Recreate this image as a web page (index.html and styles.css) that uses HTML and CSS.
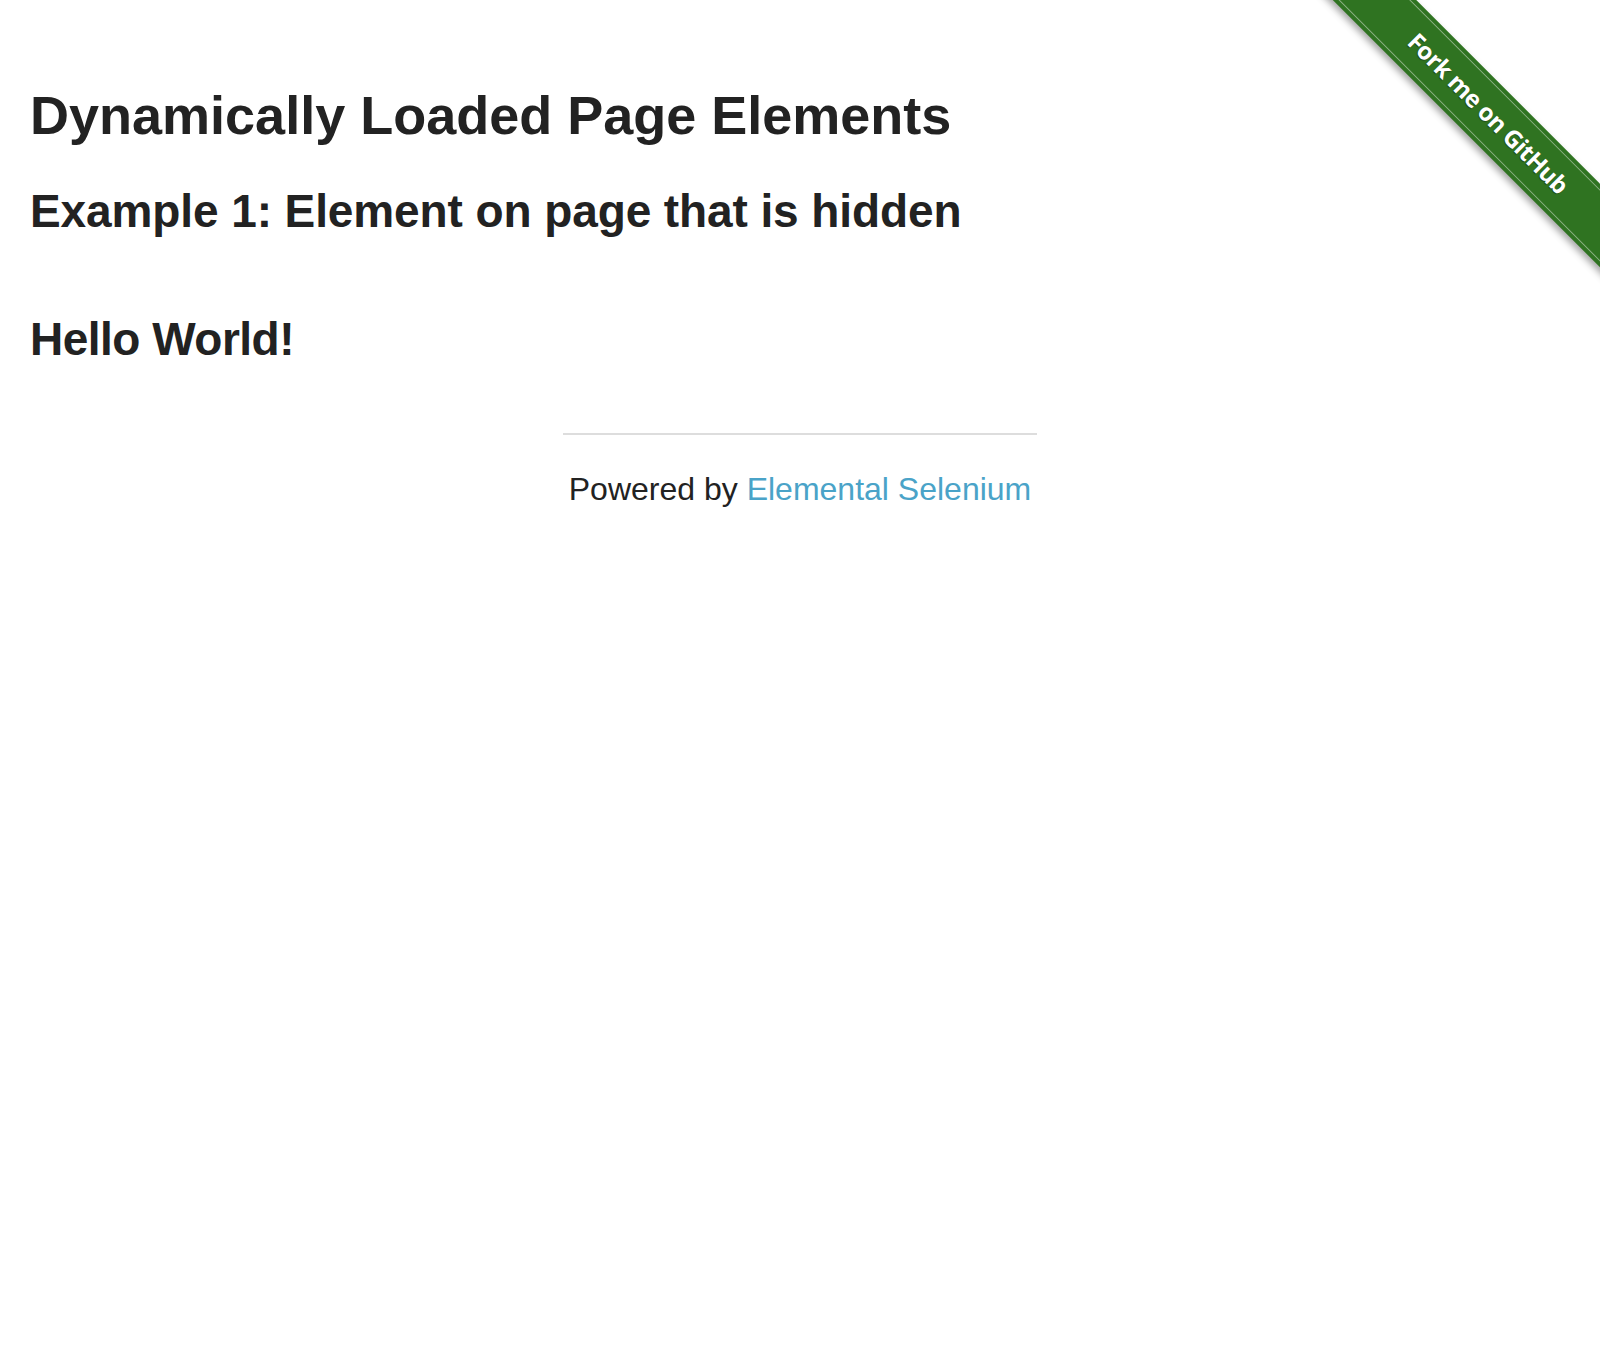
FILE: index.html
```html
<!DOCTYPE html>
<html>
<head>
<meta charset="utf-8">
<title>The Internet</title>
<link rel="stylesheet" href="styles.css">
</head>
<body>
<div class="ribbon-wrap">
  <a class="ribbon" href="#"><span class="ribbon-text">Fork me on GitHub</span></a>
</div>
<div class="content">
  <h3 class="title">Dynamically Loaded Page Elements</h3>
  <h4 class="subtitle">Example 1: Element on page that is hidden</h4>
  <div class="finish"><h4 class="subtitle hello">Hello World!</h4></div>
</div>
<div class="footer">
  <hr class="rule">
  <div class="powered">Powered by <a class="link" href="#">Elemental Selenium</a></div>
</div>
</body>
</html>
```
FILE: styles.css
```css
html, body {
  margin: 0;
  padding: 0;
  background: #fff;
}
body {
  font-family: "Liberation Sans", Arial, Helvetica, sans-serif;
  color: #222;
  width: 1600px;
  position: relative;
}
.content {
  padding-left: 30px;
  padding-top: 83px;
}
.title {
  font-size: 54px;
  line-height: 1.2;
  font-weight: bold;
  margin: 0;
  letter-spacing: 0;
}
.subtitle {
  font-size: 46px;
  line-height: 1.2;
  font-weight: bold;
  margin: 36px 0 0 0;
  letter-spacing: -0.1px;
}
.finish {
  margin-top: 73px;
}
.finish .hello {
  margin: 0;
  letter-spacing: -0.5px;
}
.footer {
  width: 474px;
  margin: 66px auto 0 auto;
}
.rule {
  border: 0;
  border-top: 2px solid #ddd;
  height: 0;
  margin: 0;
}
.powered {
  text-align: center;
  font-size: 32px;
  line-height: 48px;
  margin-top: 30px;
}
.link {
  color: #4aa3c8;
  text-decoration: none;
}
.ribbon-wrap {
  position: absolute;
  top: 0;
  right: 0;
  width: 300px;
  height: 300px;
  overflow: hidden;
}
.ribbon {
  position: absolute;
  left: -22px;
  top: 84px;
  width: 420px;
  height: 59px;
  background: #2f7321;
  transform: rotate(45deg);
  box-shadow: 0 4px 7px rgba(0, 0, 0, 0.35);
  display: flex;
  align-items: center;
  justify-content: center;
  text-decoration: none;
}
.ribbon::before {
  content: "";
  position: absolute;
  left: 0;
  right: 0;
  top: 4px;
  bottom: 4px;
  border-top: 1px solid rgba(255, 255, 255, 0.45);
  border-bottom: 1px solid rgba(255, 255, 255, 0.45);
}
.ribbon-text {
  font-family: "Open Sans", "DejaVu Sans", sans-serif;
  font-weight: 700;
  font-size: 24px;
  color: #fff;
  text-shadow: 0 1px 1px rgba(0, 0, 0, 0.4);
  position: relative;
  top: -1px;
  letter-spacing: -0.6px;
}
```
